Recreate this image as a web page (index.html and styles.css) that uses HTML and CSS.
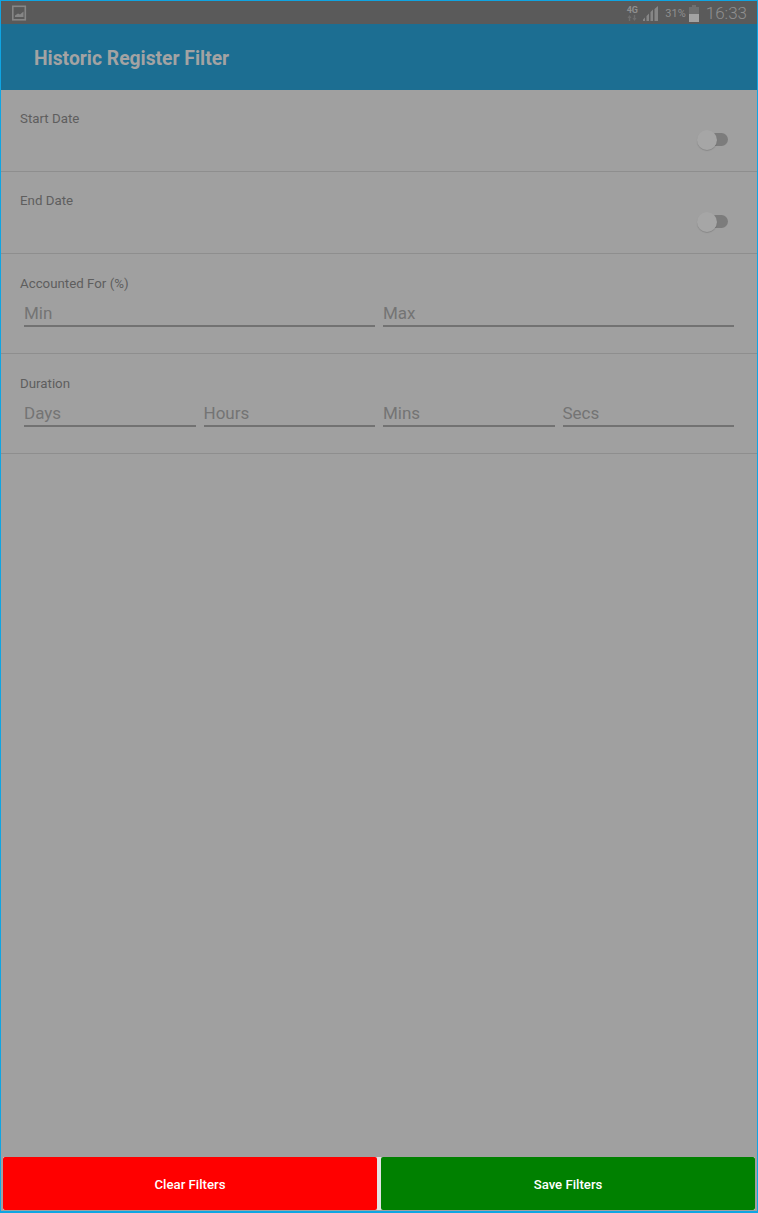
FILE: index.html
```html
<!DOCTYPE html>
<html lang="en">
<head>
    <meta charset="UTF-8">
    <meta name="viewport" content="width=device-width, initial-scale=1.0">
    <title>Historic Register Filter</title>
    <link rel="stylesheet" href="styles.css">
</head>
<body>
    <div class="screen">
        <div class="status-bar">
            <svg class="status-photo" width="16" height="16" viewBox="0 0 16 16">
                <rect x="1.800" y="1.300" width="12.500" height="13.500" fill="none" stroke="#868686" stroke-width="1.600"/>
                <path d="M4 12v-1.500l3-2 2 1 3.500-3v5.500z" fill="#868686"/>
            </svg>
            <div class="status-right">
                <div class="status-net">
                    <span>4G</span>
                    <svg width="10" height="6" viewBox="0 0 10 6"><path d="M2.500 0l2 3h-1.300v3h-1.400v-3h-1.300zM7.500 6l-2-3h1.300v-3h1.400v3h1.300z" fill="#6e6e6e"/></svg>
                </div>
                <svg class="status-signal" width="16" height="15" viewBox="0 0 16 15">
                    <path d="M0 15v-1.500l2-2v3.500zM3.500 15v-5l2.500-2.500v7.500zM7.500 15v-9l2.500-2.500v11.500zM11.500 15v-12l3.500-3v15z" fill="#868686"/>
                </svg>
                <span class="status-pct">31%</span>
                <svg class="status-battery" width="10" height="17" viewBox="0 0 10 17">
                    <path d="M3 0h4v2h3v15h-10v-15h3z" fill="#6f6f6f"/>
                    <rect y="9" width="10" height="8" fill="#a3a3a3"/>
                </svg>
                <span class="status-time">16:33</span>
            </div>
        </div>

        <header class="app-bar">
            <h1>Historic Register Filter</h1>
        </header>

        <main class="filters">
            <section class="filter-row toggle-row">
                <label>Start Date</label>
                <div class="toggle"><span class="toggle-knob"></span></div>
            </section>
            <section class="filter-row toggle-row">
                <label>End Date</label>
                <div class="toggle"><span class="toggle-knob"></span></div>
            </section>
            <section class="filter-row field-row">
                <label>Accounted For (%)</label>
                <div class="fields">
                    <div class="field">Min</div>
                    <div class="field">Max</div>
                </div>
            </section>
            <section class="filter-row field-row">
                <label>Duration</label>
                <div class="fields">
                    <div class="field">Days</div>
                    <div class="field">Hours</div>
                    <div class="field">Mins</div>
                    <div class="field">Secs</div>
                </div>
            </section>
        </main>

        <footer class="actions">
            <button class="clear-button">Clear Filters</button>
            <button class="save-button">Save Filters</button>
        </footer>
    </div>
</body>
</html>
```

FILE: styles.css
```css
* {
    box-sizing: border-box;
}

body {
    margin: 0;
    font-family: 'Roboto', sans-serif;
    background-color: #a0a0a0;
}

.screen {
    display: flex;
    flex-direction: column;
    height: 1213px;
    border: 1px solid #0fa5e3;
    border-bottom-width: 2px;
    background-color: #a0a0a0;
}

.status-bar {
    display: flex;
    justify-content: space-between;
    align-items: center;
    height: 23px;
    padding: 0 10px;
    background-color: #5a5a5a;
}

.status-right {
    display: flex;
    align-items: center;
    padding-top: 1px;
    color: #8f8f8f;
}

.status-net {
    display: flex;
    flex-direction: column;
    align-items: center;
    width: 12px;
    margin-right: 5px;
    font-size: 9px;
    font-weight: 700;
    line-height: 9px;
}

.status-net svg {
    display: block;
}

.status-signal {
    margin-right: 6px;
}

.status-pct {
    margin-right: 3px;
    font-size: 11px;
}

.status-battery {
    margin-right: 7px;
}

.status-time {
    font-size: 17px;
    font-weight: 300;
}

.app-bar {
    display: flex;
    align-items: center;
    height: 66px;
    padding: 2px 0 0 33px;
    background-color: #1c6e92;
}

.app-bar h1 {
    margin: 0;
    font-size: 19.300px;
    font-weight: 700;
    color: #a3a3a3;
}

.filters {
    flex: 1;
}

.filter-row {
    border-bottom: 1px solid #8e8e8e;
}

.filter-row label {
    display: block;
    font-size: 13.300px;
    line-height: 16px;
    color: #5e5e5e;
}

.toggle-row {
    position: relative;
    height: 82px;
    padding: 21px 19px 0;
}

.toggle {
    position: absolute;
    top: 43px;
    right: 29px;
    width: 27px;
    height: 13px;
    border-radius: 7px;
    background-color: #7c7c7c;
}

.toggle-knob {
    position: absolute;
    top: -3px;
    left: -4px;
    width: 20px;
    height: 20px;
    border-radius: 50%;
    background-color: #a6a6a6;
    box-shadow: 0 1px 1px rgba(0, 0, 0, 0.15);
}

.field-row {
    height: 100px;
    padding: 22px 23px 0 19px;
}

.fields {
    display: flex;
    gap: 8px;
    margin-top: 9px;
    padding-left: 4px;
}

.field {
    flex: 1;
    height: 26px;
    font-size: 17px;
    line-height: 25px;
    color: #747474;
    border-bottom: 2px solid #727272;
}

.actions {
    display: flex;
    gap: 4px;
    height: 53px;
    margin: 0 2px 1px;
    background-color: #e4e4e4;
}

.actions button {
    flex: 1;
    padding: 1px 0 0;
    border: none;
    border-radius: 2px;
    font-family: inherit;
    font-size: 13.200px;
    font-weight: 500;
    color: white;
}

.clear-button {
    background-color: #ff0000;
}

.save-button {
    background-color: #008000;
}
```
